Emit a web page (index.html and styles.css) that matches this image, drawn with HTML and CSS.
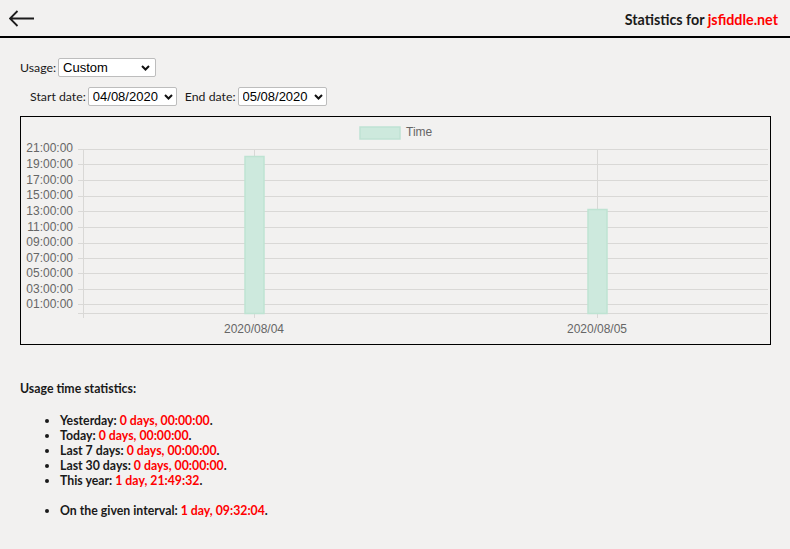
FILE: index.html
```html
<!DOCTYPE html>
<html>
<head>
<meta charset="utf-8">
<link rel="stylesheet" href="styles.css">
</head>
<body>
<header class="topbar">
  <svg class="back" width="26" height="18" viewBox="0 0 26 18">
    <path d="M1 8.5 H25 M8.5 1 L1 8.5 L8.5 16" fill="none" stroke="#1c1c1c" stroke-width="1.8"/>
  </svg>
  <div class="title">Statistics for <span class="red">jsfiddle.net</span></div>
</header>
<main class="content">
  <div class="row">
    <label class="lbl">Usage:</label>
    <span class="selwrap">
      <select class="sel sel-usage"><option>Custom</option><option>Last 30 days</option></select>
      <svg class="chev" width="9" height="6" viewBox="0 0 9 6"><path d="M1 1 L4.5 4.5 L8 1" fill="none" stroke="#111" stroke-width="2"/></svg>
    </span>
  </div>
  <div class="row row-dates">
    <label class="lbl">Start date:</label>
    <span class="selwrap">
      <select class="sel sel-date"><option>04/08/2020</option></select>
      <svg class="chev" width="9" height="6" viewBox="0 0 9 6"><path d="M1 1 L4.5 4.5 L8 1" fill="none" stroke="#111" stroke-width="2"/></svg>
    </span>
    <label class="lbl lbl-end">End date:</label>
    <span class="selwrap">
      <select class="sel sel-date"><option>05/08/2020</option></select>
      <svg class="chev" width="9" height="6" viewBox="0 0 9 6"><path d="M1 1 L4.5 4.5 L8 1" fill="none" stroke="#111" stroke-width="2"/></svg>
    </span>
  </div>
  <div class="chart">
    <svg width="749" height="227" viewBox="21 117 749 227" class="chart-svg">
      <g stroke="#d9d8d6" stroke-width="1">
        <line x1="78" y1="149.5" x2="768" y2="149.5"/>
        <line x1="78" y1="164.5" x2="768" y2="164.5"/>
        <line x1="78" y1="180.5" x2="768" y2="180.5"/>
        <line x1="78" y1="196.5" x2="768" y2="196.5"/>
        <line x1="78" y1="211.5" x2="768" y2="211.5"/>
        <line x1="78" y1="227.5" x2="768" y2="227.5"/>
        <line x1="78" y1="243.5" x2="768" y2="243.5"/>
        <line x1="78" y1="258.5" x2="768" y2="258.5"/>
        <line x1="78" y1="273.5" x2="768" y2="273.5"/>
        <line x1="78" y1="289.5" x2="768" y2="289.5"/>
        <line x1="78" y1="304.5" x2="768" y2="304.5"/>
        <line x1="78" y1="313.5" x2="768" y2="313.5"/>
        <line x1="83.5" y1="149" x2="83.5" y2="318"/>
        <line x1="254.5" y1="149" x2="254.5" y2="318"/>
        <line x1="597.5" y1="149" x2="597.5" y2="318"/>
      </g>
      <rect x="360" y="127" width="40" height="12" fill="#cde9dd" stroke="#bfe2d3" stroke-width="1.5"/>
      <text x="406" y="135.5" class="ctext">Time</text>
      <rect x="245" y="156.5" width="19" height="157" fill="#cde9dd" stroke="#bee3d2" stroke-width="1.5"/>
      <rect x="588" y="209.5" width="19" height="104" fill="#cde9dd" stroke="#bee3d2" stroke-width="1.5"/>
      <g class="ctext" text-anchor="end">
        <text x="73" y="152">21:00:00</text>
        <text x="73" y="168">19:00:00</text>
        <text x="73" y="184">17:00:00</text>
        <text x="73" y="199">15:00:00</text>
        <text x="73" y="215">13:00:00</text>
        <text x="73" y="231">11:00:00</text>
        <text x="73" y="246">09:00:00</text>
        <text x="73" y="262">07:00:00</text>
        <text x="73" y="277">05:00:00</text>
        <text x="73" y="293">03:00:00</text>
        <text x="73" y="308">01:00:00</text>
      </g>
      <g class="ctext" text-anchor="middle">
        <text x="254" y="333">2020/08/04</text>
        <text x="597" y="333">2020/08/05</text>
      </g>
    </svg>
  </div>
  <section class="stats">
    <div class="stats-title">Usage time statistics:</div>
    <ul class="stats-list">
      <li>Yesterday: <span class="red">0 days, 00:00:00</span>.</li>
      <li>Today: <span class="red">0 days, 00:00:00</span>.</li>
      <li>Last 7 days: <span class="red">0 days, 00:00:00</span>.</li>
      <li>Last 30 days: <span class="red">0 days, 00:00:00</span>.</li>
      <li>This year: <span class="red">1 day, 21:49:32</span>.</li>
      <li class="gap">On the given interval: <span class="red">1 day, 09:32:04</span>.</li>
    </ul>
  </section>
</main>
</body>
</html>
```
FILE: styles.css
```css
html, body {
  margin: 0;
  padding: 0;
  background: #f2f1f0;
}
body {
  font-family: Lato, "Liberation Sans", sans-serif;
  font-size: 12.3px;
  color: #1a1a1a;
  width: 790px;
  height: 549px;
  overflow: hidden;
}
.topbar {
  height: 36px;
  border-bottom: 2px solid #000;
  display: flex;
  align-items: center;
  justify-content: space-between;
  padding: 0 12px 0 9px;
}
.back {
  display: block;
  margin-top: 1px;
}
.title {
  font-weight: bold;
  font-size: 14.3px;
  margin-top: 2px;
}
.red {
  color: #f00;
}
.content {
  padding: 20px 19px 0 20px;
}
.row {
  display: flex;
  align-items: center;
  height: 19px;
}
.row-dates {
  margin-top: 10px;
  padding-left: 10px;
}
.lbl {
  margin-right: 2px;
}
.lbl-end {
  margin-left: 8px;
}
.selwrap {
  position: relative;
  display: block;
}
.sel {
  display: block;
  -webkit-appearance: none;
  appearance: none;
  font-family: "Liberation Sans", Arial, sans-serif;
  font-size: 13px;
  height: 19px;
  box-sizing: border-box;
  padding: 0 0 0 4px;
  margin: 0;
  color: #000;
  background: #fff;
  border: 1px solid #bdbdbd;
  border-radius: 2px;
  outline: none;
}
.chev {
  position: absolute;
  top: 7px;
  right: 6px;
  pointer-events: none;
}
.sel-usage {
  width: 98px;
}
.sel-date {
  width: 89px;
}
.sel-date + .chev {
  right: 4px;
}
.chart {
  margin-top: 10px;
  border: 1px solid #000;
  width: 749px;
  height: 227px;
}
.chart-svg {
  display: block;
}
.ctext {
  font-family: "Liberation Sans", Arial, sans-serif;
  font-size: 12px;
  fill: #666;
}
.stats {
  margin-top: 36px;
}
.stats-title {
  font-weight: bold;
  line-height: 15px;
}
.stats-list {
  margin: 17px 0 0 0;
  padding-left: 40px;
  font-weight: bold;
  line-height: 15px;
}
.stats-list .gap {
  margin-top: 15px;
}
```
